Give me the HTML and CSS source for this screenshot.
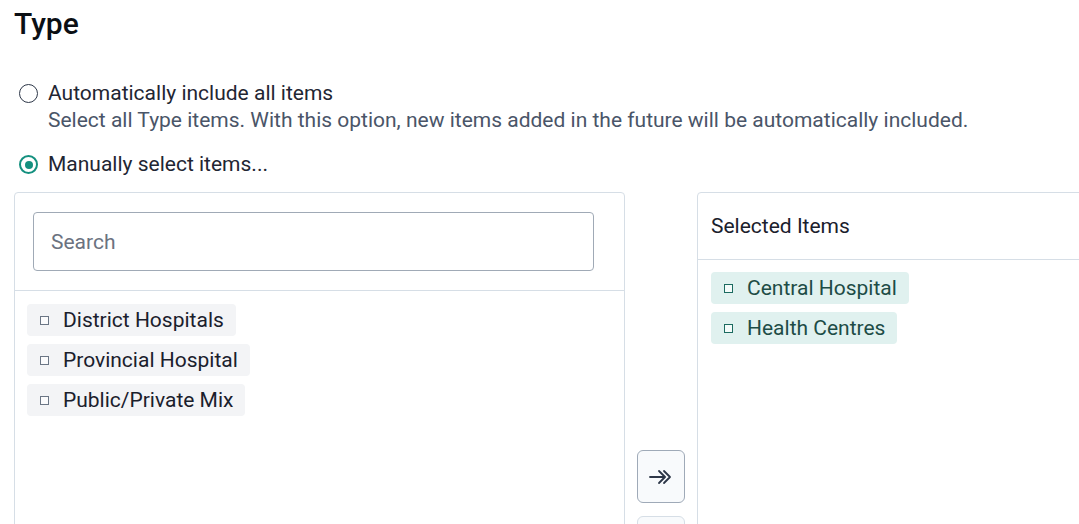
FILE: index.html
```html
<!DOCTYPE html>
<html>
<head>
<meta charset="utf-8">
<link rel="stylesheet" href="styles.css">
</head>
<body>
<h1 class="title">Type</h1>
<div class="options">
  <label class="option">
    <span class="radio"></span>
    <span class="option-body">
      <span class="option-label">Automatically include all items</span>
      <span class="option-help">Select all Type items. With this option, new items added in the future will be automatically included.</span>
    </span>
  </label>
  <label class="option">
    <span class="radio checked"></span>
    <span class="option-body">
      <span class="option-label">Manually select items...</span>
    </span>
  </label>
</div>
<div class="transfer">
  <div class="panel">
    <div class="panel-search">
      <div class="search">Search</div>
    </div>
    <div class="list">
      <div class="chip"><span class="box"></span><span>District Hospitals</span></div>
      <div class="chip"><span class="box"></span><span>Provincial Hospital</span></div>
      <div class="chip"><span class="box"></span><span>Public/Private Mix</span></div>
    </div>
  </div>
  <div class="actions">
    <button class="btn">
      <svg width="24" height="16" viewBox="0 0 24 16" fill="none" stroke="#2d3748" stroke-width="1.8" stroke-linecap="round" stroke-linejoin="round">
        <path d="M1 8H15.5"/>
        <path d="M10 2L16 8L10 14"/>
        <path d="M15 2L21 8L15 14"/>
      </svg>
    </button>
    <button class="btn disabled"></button>
  </div>
  <div class="panel">
    <div class="panel-head">Selected Items</div>
    <div class="list selected">
      <div class="chip sel"><span class="box"></span><span>Central Hospital</span></div>
      <div class="chip sel"><span class="box"></span><span>Health Centres</span></div>
    </div>
  </div>
</div>
</body>
</html>
```
FILE: styles.css
```css
html, body {
  margin: 0;
  overflow: hidden;
}
body {
  padding: 6px 0 0 14px;
  font-family: Roboto, "Liberation Sans", sans-serif;
  color: #1a202c;
  background: #fff;
  width: 1400px;
}
.title {
  margin: 0;
  font-size: 30px;
  line-height: 35px;
  font-weight: 500;
  color: #0b0f14;
}
.options {
  margin-top: 39px;
  display: flex;
  flex-direction: column;
  gap: 17px;
  padding-left: 5px;
}
.option {
  display: flex;
  gap: 10px;
  align-items: flex-start;
}
.radio {
  width: 19px;
  height: 19px;
  box-sizing: border-box;
  border: 1.5px solid #2d3748;
  border-radius: 50%;
  margin-top: 4px;
  flex: none;
  display: flex;
  align-items: center;
  justify-content: center;
}
.radio.checked {
  border: 2.5px solid #14907f;
}
.radio.checked::after {
  content: "";
  width: 8px;
  height: 8px;
  border-radius: 50%;
  background: #14907f;
}
.option-body {
  display: flex;
  flex-direction: column;
  font-size: 21px;
  line-height: 27px;
}
.option-label {
  color: #1f2633;
}
.option-help {
  color: #4a5568;
}
.transfer {
  margin-top: 14px;
  display: flex;
  align-items: flex-start;
}
.panel {
  width: 611px;
  height: 400px;
  box-sizing: border-box;
  border: 1px solid #d6dee6;
  border-radius: 4px;
  flex: none;
}
.panel-search {
  padding: 19px 18px;
  border-bottom: 1px solid #d6dee6;
}
.search {
  width: 561px;
  height: 59px;
  box-sizing: border-box;
  border: 1px solid #a0aab6;
  border-radius: 4px;
  padding-left: 17px;
  display: flex;
  align-items: center;
  font-size: 21px;
  color: #6b7280;
}
.list {
  padding: 13px 12px;
  display: flex;
  flex-direction: column;
  align-items: flex-start;
  gap: 8px;
}
.list.selected {
  padding: 12px 13px;
}
.chip {
  height: 32px;
  display: flex;
  align-items: center;
  gap: 14px;
  padding: 0 12px 0 13px;
  background: #f3f4f6;
  border-radius: 4px;
  font-size: 21px;
  color: #1a202c;
}
.box {
  width: 9px;
  height: 9px;
  box-sizing: border-box;
  border: 1.5px solid #6b7685;
  background: #fbfbfc;
  flex: none;
}
.chip.sel {
  background: #e0f1ef;
  color: #1d4c46;
}
.chip.sel .box {
  border-color: #1b6b60;
  background: #f4fbfa;
}
.panel-head {
  height: 67px;
  box-sizing: border-box;
  border-bottom: 1px solid #d6dee6;
  padding-left: 13px;
  display: flex;
  align-items: center;
  font-size: 21px;
  color: #1a202c;
}
.actions {
  width: 72px;
  flex: none;
  display: flex;
  flex-direction: column;
  align-items: center;
  gap: 13px;
  padding-top: 258px;
}
.btn {
  width: 48px;
  height: 53px;
  box-sizing: border-box;
  border: 1px solid #9faab8;
  border-radius: 6px;
  background: #f8fafc;
  display: flex;
  align-items: center;
  justify-content: center;
  padding: 0;
}
.btn.disabled {
  border-color: #d6dee6;
}
```
